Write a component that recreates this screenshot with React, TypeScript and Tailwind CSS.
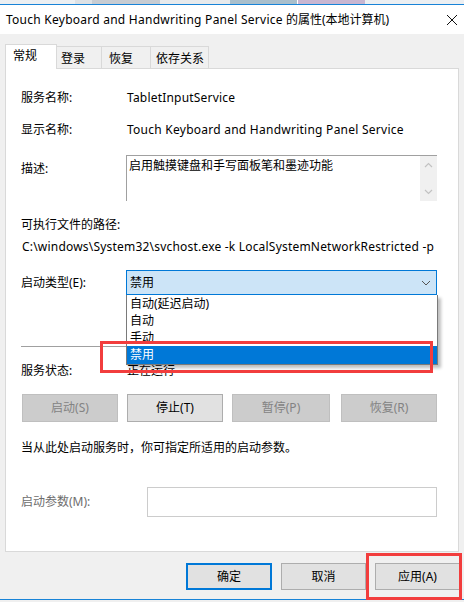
import React from "react";

const font = { fontFamily: '"Noto Sans", "Noto Sans CJK SC", sans-serif' };

function Tab({ label, active = false, className = "" }: { label: string; active?: boolean; className?: string }) {
  if (active) {
    return (
      <div className="relative z-10 -mb-px h-[25px] w-[52px] border border-b-0 border-[#d9d9d9] bg-white pl-[7px] pt-[3px] leading-[16px]">
        {label}
      </div>
    );
  }
  return (
    <div className={`mt-[2px] h-[22px] border border-l-0 border-b-0 border-[#d9d9d9] bg-[#f0f0f0] pt-[4px] leading-[16px] ${className}`}>
      {label}
    </div>
  );
}

function ServiceButton({ label, disabled = false, width }: { label: string; disabled?: boolean; width: string }) {
  return (
    <div
      className={`flex h-[28px] items-center justify-center border ${width} ${
        disabled ? "border-[#bfbfbf] bg-[#cccccc] text-[#838383]" : "border-[#adadad] bg-[#e1e1e1] text-black"
      }`}
    >
      {label}
    </div>
  );
}

export default function App() {
  return (
    <div className="relative h-[602px] w-[464px] overflow-hidden bg-[#f0f0f0] text-[12px] text-black" style={font}>
      {/* background window peeking above */}
      <div className="flex h-[4px]">
        <div className="w-[75px] bg-[#eceff2]" />
        <div className="w-[17px] bg-[#dde1e5]" />
        <div className="w-[68px] bg-[#c7ccd2]" />
        <div className="w-[70px] bg-[#e8eaec]" />
        <div className="w-[67px] bg-[#a9bfcc]" />
        <div className="w-[1px] bg-white" />
        <div className="w-[67px] bg-[#c9b6d1]" />
        <div className="flex-1 bg-[#eceff2]" />
      </div>
      <div className="h-px bg-[#1883d7]" />

      {/* title bar */}
      <div className="flex h-[29px] items-center justify-between bg-white pl-[6px] pr-[5px]">
        <span>
          <span className="tracking-[0.25px]">Touch Keyboard and Handwriting Panel Service</span> 的属性(本地计算机)
        </span>
        <svg width="12" height="12" viewBox="0 0 12 12" className="mr-[1px]">
          <path d="M1 1 L11 11 M11 1 L1 11" stroke="#111" strokeWidth="1" />
        </svg>
      </div>

      {/* tabs */}
      <div className="ml-[5px] mt-[10px] flex">
        <Tab label="常规" active />
        <Tab label="登录" className="w-[45px] pl-[4px]" />
        <Tab label="恢复" className="w-[49px] pl-[7px]" />
        <Tab label="依存关系" className="w-[58px] pl-[5px]" />
      </div>

      {/* tab panel */}
      <div className="ml-[5px] flex h-[484px] w-[454px] flex-col border border-[#d9d9d9] bg-white pl-[15px] pr-[21px]">
        <div className="mt-[19px] flex h-[20px] items-center">
          <span className="w-[106px]">服务名称:</span>
          <span className="tracking-[0.2px]">TabletInputService</span>
        </div>
        <div className="mt-[12px] flex h-[20px] items-center">
          <span className="w-[106px]">显示名称:</span>
          <span className="tracking-[0.25px]">Touch Keyboard and Handwriting Panel Service</span>
        </div>
        <div className="mt-[15px] flex h-[46px]">
          <span className="mt-[4px] h-[20px] w-[105px] leading-[20px]">描述:</span>
          <div className="flex flex-1 border-l border-t border-[#a0a0a0]">
            <div className="flex-1 pl-[2px] pt-[1px] leading-[18px]">启用触摸键盘和手写面板笔和墨迹功能</div>
            <div className="flex w-[17px] flex-col items-center justify-between bg-[#f0f0f0] py-[6px]">
              <svg width="9" height="6" viewBox="0 0 9 6">
                <path d="M1 5 L4.5 1.5 L8 5" stroke="#c2c2c2" strokeWidth="1.2" fill="none" />
              </svg>
              <svg width="9" height="6" viewBox="0 0 9 6">
                <path d="M1 1 L4.5 4.5 L8 1" stroke="#c2c2c2" strokeWidth="1.2" fill="none" />
              </svg>
            </div>
          </div>
        </div>
        <div className="mt-[15px] h-[18px] leading-[18px]">可执行文件的路径:</div>
        <div className="mt-[4px] h-[18px] whitespace-nowrap pl-px leading-[18px] tracking-[0.2px]">
          C:\windows\System32\svchost.exe -k LocalSystemNetworkRestricted -p
        </div>
        <div className="mt-[14px] flex h-[25px]">
          <span className="w-[105px] pt-[3px] leading-[20px]">启动类型(E):</span>
          <div className="flex flex-1 items-center justify-between border border-[#0078d7] bg-[#cce4f7] pl-[3px] pr-[5px]">
            <span>禁用</span>
            <svg width="10" height="6" viewBox="0 0 10 6">
              <path d="M1 1 L5 5 L9 1" stroke="#555" strokeWidth="1" fill="none" />
            </svg>
          </div>
        </div>
        <div className="mt-[51px] h-px bg-[#a0a0a0]" />
        <div className="mt-[14px] flex h-[20px] items-center">
          <span className="w-[106px]">服务状态:</span>
          <span>正在运行</span>
        </div>
        <div className="mt-[13px] flex gap-[9px] pl-px">
          <ServiceButton label="启动(S)" disabled width="w-[96px]" />
          <ServiceButton label="停止(T)" width="w-[96px]" />
          <ServiceButton label="暂停(P)" disabled width="w-[98px]" />
          <div className="ml-[2px]">
            <ServiceButton label="恢复(R)" disabled width="w-[96px]" />
          </div>
        </div>
        <div className="mt-[17px] h-[18px] leading-[18px]">当从此处启动服务时，你可指定所适用的启动参数。</div>
        <div className="mt-[30px] flex h-[30px] items-center">
          <span className="w-[126px] text-[#6d6d6d]">启动参数(M):</span>
          <div className="h-[30px] flex-1 border border-[#cccccc] bg-white" />
        </div>
      </div>

      {/* dialog buttons */}
      <div className="mt-[11px] flex justify-end gap-[9px] pr-[4px]">
        <div className="flex h-[27px] w-[86px] items-center justify-center border-2 border-[#0078d7] bg-[#e1e1e1]">确定</div>
        <div className="flex h-[27px] w-[85px] items-center justify-center border border-[#adadad] bg-[#e1e1e1]">取消</div>
        <div className="flex h-[27px] w-[85px] items-center justify-center border border-[#adadad] bg-[#e1e1e1]">应用(A)</div>
      </div>

      <div className="absolute bottom-[2px] left-0 h-px w-full bg-[#1883d7]" />

      {/* open dropdown list */}
      <div className="absolute left-[126px] top-[295px] flex h-[70px] w-[312px] flex-col border border-t-0 border-[#7a7a7a] bg-white shadow-[3px_3px_3px_rgba(0,0,0,0.25)]">
        <div className="flex h-[17px] items-center pl-[3px]">自动(延迟启动)</div>
        <div className="flex h-[17px] items-center pl-[3px]">自动</div>
        <div className="flex h-[17px] items-center pl-[3px]">手动</div>
        <div className="flex h-[18px] items-center bg-[#0078d7] pl-[3px] text-white">禁用</div>
      </div>

      {/* highlight boxes */}
      <div className="absolute left-[100px] top-[341px] h-[32px] w-[333px] border-[3px] border-[#f23d3d]" />
      <div className="absolute left-[366px] top-[553px] h-[47px] w-[96px] border-[3px] border-[#f23d3d]" />
    </div>
  );
}
